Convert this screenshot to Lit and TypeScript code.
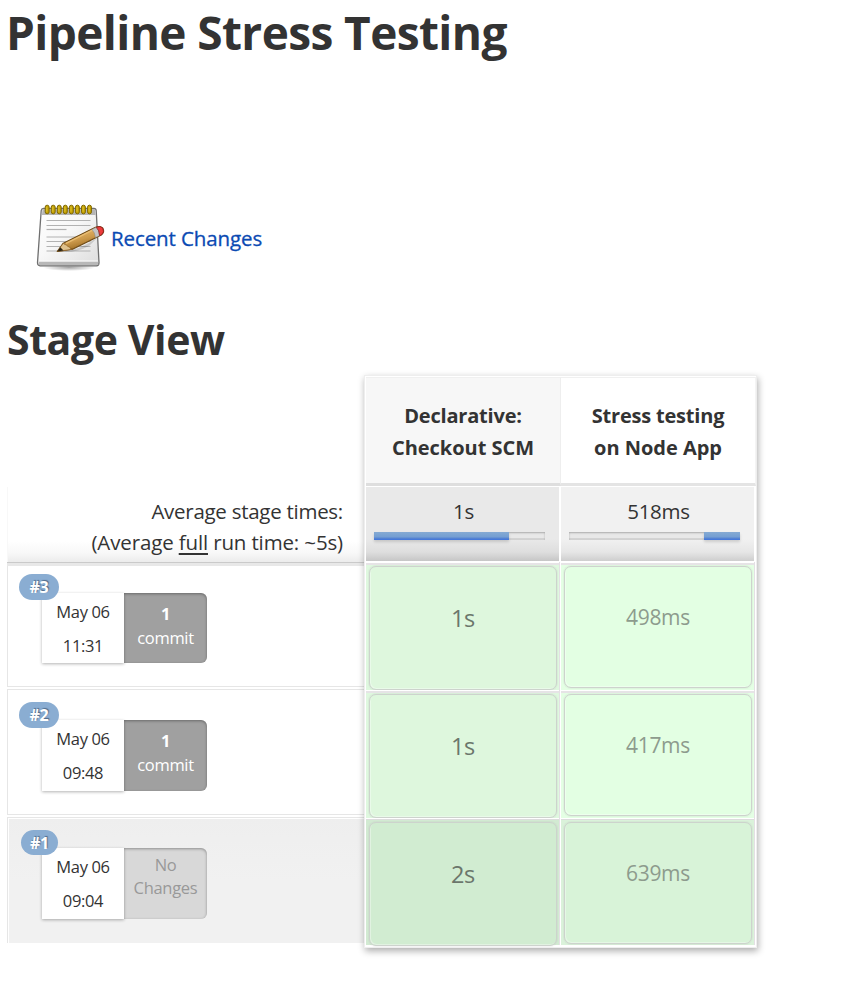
import { LitElement, html, css, svg } from "lit";
import { customElement, property } from "lit/decorators.js";
import { classMap } from "lit/directives/class-map.js";

interface Run {
  id: string;
  date: string;
  time: string;
  changes: [string, string];
  empty?: boolean;
  first: string;
  second: string;
}

const RUNS: Run[] = [
  { id: "#3", date: "May 06", time: "11:31", changes: ["1", "commit"], first: "1s", second: "498ms" },
  { id: "#2", date: "May 06", time: "09:48", changes: ["1", "commit"], first: "1s", second: "417ms" },
  { id: "#1", date: "May 06", time: "09:04", changes: ["No", "Changes"], empty: true, first: "2s", second: "639ms" },
];

@customElement("notepad-icon")
export class NotepadIcon extends LitElement {
  static styles = css`
    :host { display: block; width: 72px; height: 72px; }
    svg { display: block; }
  `;

  render() {
    const rings = [0, 1, 2, 3, 4, 5, 6, 7];
    const lines = [[19.5, 44], [24.5, 44], [28.5, 20], [36, 44], [40.5, 44], [45.5, 44], [50, 44]];
    return html`
      <svg width="72" height="72" viewBox="0 0 72 72">
        <defs>
          <linearGradient id="paper" x1="0" y1="0" x2="1" y2="1">
            <stop offset="0" stop-color="#fff" />
            <stop offset=".45" stop-color="#f7f7f7" />
            <stop offset="1" stop-color="#dcdcdc" />
          </linearGradient>
          <linearGradient id="wood" x1="0.35" y1="0.25" x2=".6" y2=".8">
            <stop offset="0" stop-color="#e2b266" />
            <stop offset=".5" stop-color="#cc9a4c" />
            <stop offset="1" stop-color="#a37228" />
          </linearGradient>
          <radialGradient id="shade">
            <stop offset="0" stop-color="#000" stop-opacity=".35" />
            <stop offset="1" stop-color="#000" stop-opacity="0" />
          </radialGradient>
        </defs>
        <ellipse cx="34" cy="66.500" rx="26" ry="3.500" fill="url(#shade)" />
        <path d="M8.500 7.500H59Q61 7.500 61.200 9.500L64 61.500Q64 64.800 61.500 64.800H5Q2.500 64.800 2.500 61.500L6.200 9.500Q6.500 7.500 8.500 7.500Z"
          fill="url(#paper)" stroke="#6f6f6f" stroke-width="1.300" />
        <path d="M7.500 8.300H60L60.500 14H7Z" fill="#b5b5b5" />
        <path d="M3.800 60.500H63.100L63.300 64H3.800Z" fill="#b8b8b8" />
        <path d="M4 60H63" stroke="#fafafa" />
        ${lines.map(([y, w]) => svg`<path d=${`M11.500 ${y}h${w}`} stroke="#b2b2b2" stroke-width="1.200" />`)}
        ${rings.map((i) => svg`
          <rect x=${10.2 + i * 6.05} y="4.200" width="3.900" height="8.600" rx="1.900" fill="#c4a000" stroke="#806900" stroke-width="1" />
          <path d=${`M${11.8 + i * 6.05} 5.700v5`} stroke="#e0c838" stroke-width="1" />`)}
        <path d="M24 50.500Q39 53 54 45L63 36Q45 50 24 50.500Z" fill="#000" opacity=".14" />
        <path d="M22.300 50.500L28.300 42.200L60 26.500Q64.800 24.300 67.700 27Q70 31 66.300 34L37.500 48.200Z"
          fill="url(#wood)" stroke="#6e4a16" stroke-width="1.200" stroke-linejoin="round" />
        <path d="M22.300 50.500L28.300 42.200Q29.500 43.800 31.500 44Q32.500 46 34.500 46Q35 48.200 37.500 48.200Z" fill="#dfc18c" stroke="#84581c" stroke-width=".6" />
        <path d="M22.300 50.500L25.300 46.300L28.500 49.500Z" fill="#2c2414" />
        <path d="M31 42.300L58 28.800" stroke="#e9bd72" stroke-width="1.500" />
        <path d="M57 28.500L61.300 26.300Q64.300 29 64.600 34.600L60.500 36.500Q60 31.500 57 28.500Z" fill="#c4c4c4" stroke="#888" stroke-width=".5" />
        <path d="M61.300 26.300Q65.500 24.300 67.700 27Q70 31 66.300 34L64.600 34.600Q64.300 29 61.300 26.300Z" fill="#ed3b3b" stroke="#8b2020" stroke-width=".8" />
      </svg>`;
  }
}

@customElement("run-summary")
export class RunSummary extends LitElement {
  @property({ attribute: false }) run!: Run;

  static styles = css`
    :host { display: block; }
    .row {
      height: 121px; box-sizing: border-box; border: 1px solid #e6e6e6; border-right: 0;
      border-top: 0; padding: 27px 0 0 34px; background: #fff;
    }
    .row.mid { height: 126px; border-top: 1px solid #e6e6e6; padding-top: 30px; margin-top: 2px; }
    .row.last {
      height: 126px; border-top: 1px solid #e6e6e6; border-bottom: 0; padding-top: 30px; margin-top: 2px;
      background: linear-gradient(#eee, #f1f1f1 50%); box-shadow: inset 1px 1px 0 #fff;
    }
    .wrap { position: relative; display: flex; width: 165px; height: 70px; }
    .mid .wrap, .last .wrap { height: 71px; }
    .badge {
      position: absolute; left: -23px; top: -19px; width: 40px; height: 26px; border-radius: 13px;
      background: #8aadd2; color: #fff; font-weight: 700; font-size: 16px; line-height: 27px;
      text-align: center; text-shadow: 1px -1px 1px #4f6b8b; z-index: 1; letter-spacing: -.3px;
    }
    .mid .badge { top: -18px; }
    .last .badge { left: -21px; top: -18px; width: 37px; height: 25px; }
    .when {
      width: 82px; background: #fff; color: #333; text-align: center; font-size: 16.5px; line-height: 33.500px;
      box-shadow: 0 1px 3px rgba(0, 0, 0, .3); box-sizing: border-box; padding-top: 2px; letter-spacing: -.35px;
    }
    .changes {
      width: 83px; box-sizing: border-box; border-radius: 0 6px 6px 0; background: #a0a0a0; color: #fff;
      text-align: center; font-size: 16.500px; line-height: 24px; padding-top: 9px;
      box-shadow: inset 0 1px 3px rgba(0, 0, 0, .35); letter-spacing: -.3px;
    }
    .empty { background: #d8d8d8; color: #999; line-height: 23px; padding-top: 5px; }
    .count { font-weight: 700; }
    .empty .count { font-weight: 400; }
  `;

  render() {
    const r = this.run;
    return html`
      <div class=${classMap({ row: true, mid: r.id === "#2", last: r.id === "#1" })}>
        <div class="wrap">
          <div class="badge">${r.id}</div>
          <div class="when"><div>${r.date}</div><div>${r.time}</div></div>
          <div class=${classMap({ changes: true, empty: !!r.empty })}>
            <div class="count">${r.changes[0]}</div><div>${r.changes[1]}</div>
          </div>
        </div>
      </div>`;
  }
}

@customElement("app-root")
export class AppRoot extends LitElement {
  static styles = css`
    :host {
      display: block; width: 865px; height: 993px; background: #fff; color: #333; overflow: hidden;
      font-family: "Open Sans", "Noto Sans", sans-serif;
    }
    h1, h2 { margin: 0; font-weight: 700; white-space: nowrap; }
    h1 { padding-left: 6px; font-size: 46px; line-height: 64px; letter-spacing: -.6px; height: 201px; box-sizing: border-box; }
    h2 { padding-left: 7px; font-size: 41px; line-height: 60px; letter-spacing: -.4px; margin-top: 36px; }
    .recent { display: flex; padding-left: 35px; height: 72px; }
    .link { margin-left: 4px; color: #0b4ab3; font-size: 20.500px; line-height: 75px; font-weight: 500; letter-spacing: -.1px; -webkit-text-stroke: .3px #0b4ab3; }
    .view { display: flex; padding-left: 7px; margin-top: 6px; align-items: flex-start; }
    .left { width: 357px; padding-top: 112px; }
    .averages {
      height: 75px; text-align: right; padding: 9px 21px 0 0; box-sizing: border-box; font-size: 20.500px; line-height: 31px;
      white-space: nowrap; background: linear-gradient(#fff 72%, #f8f8f8 88%, #ececec); border-left: 1px solid #f8f8f8;
      letter-spacing: -.27px;
    }
    .full { letter-spacing: -.14px; }
    .rule { height: 4px; box-sizing: border-box; background: #e8e8e8; border-top: 1px solid #cacaca; }
    u { text-decoration-thickness: 2px; text-underline-offset: 3px; text-decoration-skip-ink: none; }
    .table {
      position: relative; display: grid; grid-template-columns: 195px 195px; box-sizing: border-box; width: 393px; height: 573px;
      border: 2px solid #fff; border-right-width: 1px; outline: 1px solid #eee; outline-offset: -1px; box-shadow: 1px 3px 7px rgba(0, 0, 0, .33);
      background: #fff; align-content: start;
    }
    .head {
      height: 109px; box-sizing: border-box; border-bottom: 3px solid #dedede; text-align: center;
      font-weight: 700; font-size: 20px; line-height: 32px; letter-spacing: -.2px; background: #f7f7f7; border-right: 1px solid #eee;
      border-top: 1px solid #f0f0f0; padding-top: 22px;
    }
    .head.b { background: #fff; border-right-color: #f4f4f4; border-bottom-color: #e4e4e4; }
    .line2 { letter-spacing: -.02px; }
    .avg {
      height: 74px; margin: 1px 1px 1px 0; box-sizing: border-box; padding: 8px 14px 0 8px; font-size: 20.500px; line-height: 33px; text-align: center;
      background: linear-gradient(#e9e9e9 70%, #dedede 88%, #c6c6c6); border-right: 1px solid #fff; letter-spacing: -.3px;
    }
    .avg.b { background: linear-gradient(#f1f1f1 70%, #e6e6e6 88%, #cecece); }
    .num { padding-left: 8px; height: 37px; }
    .track {
      height: 8px; width: 171px; display: flex; background: #e8e8e8; box-sizing: border-box;
      box-shadow: inset 0 1px 2px #aaa, inset 0 -2px 0 #d3d3d3;
    }
    .fill { height: 8px; background: linear-gradient(#85aad3 0, #759fd2 60%, #5583d2 80%, #3f74dd); box-shadow: 0 2px 3px rgba(0,0,0,.15); }
    .cell {
      height: 128px; box-sizing: border-box; padding: 4px 3px 0; background: #dff8df;
      border-right: 1px solid #fff; box-shadow: inset -1px 0 #e4e0e4, inset 0 1px #fff, inset 0 3px #e6e4e6;
    }
    .cell.b { background: #e4ffe4; }
    .cell.dark { background: #d2ead2; height: 127px; box-shadow: inset -1px 0 #e4e0e4, inset 0 1px #fff, inset 0 2px #dcdcdc; }
    .cell.dark.b { background: #daf2da; }
    .box {
      height: 124px; width: 188px; box-sizing: border-box; border: 1px solid #cdd3cd; border-radius: 7px;
      text-align: center; color: #6b766b; font-size: 23.500px; line-height: 102px; background: #def7dd;
      box-shadow: inset 1px -1px rgba(255,255,255,.35), 0 0 0 1px rgba(170,170,170,.12); letter-spacing: -.3px;
    }
    .b .box { height: 122px; font-size: 21px; line-height: 101px; color: #8d9b8d; background: #e3ffe3; }
    .dark .box { background: #d1ecd1; }
    .dark.b .box { background: #d8f3d8; }
  `;

  render() {
    return html`
      <h1><span>Pipeline Stress Testing</span></h1>
      <div class="recent"><notepad-icon></notepad-icon><span class="link">Recent Changes</span></div>
      <h2><span>Stage View</span></h2>
      <div class="view">
        <div class="left">
          <div class="averages"><div>Average stage times:</div><div class="full">(Average <u>full</u> run time: ~5s)</div></div>
          <div class="rule"></div>
          ${RUNS.map((r) => html`<run-summary .run=${r}></run-summary>`)}
        </div>
        <div class="table">
          <div class="head">Declarative:<br /><span class="line2">Checkout SCM</span></div>
          <div class="head b">Stress testing<br /><span class="line2">on Node App</span></div>
          ${[["1s", 0, 135], ["518ms", 135, 36]].map(([label, start, width], i) => html`
            <div class=${classMap({ avg: true, b: i === 1 })}>
              <div class="num">${label}</div>
              <div class="track"><div class="fill" style="margin-left:${start}px;width:${width}px"></div></div>
            </div>`)}
          ${RUNS.map((r) => html`
            <div class=${classMap({ cell: true, dark: !!r.empty })}><div class="box">${r.first}</div></div>
            <div class=${classMap({ cell: true, b: true, dark: !!r.empty })}><div class="box">${r.second}</div></div>`)}
        </div>
      </div>`;
  }
}
